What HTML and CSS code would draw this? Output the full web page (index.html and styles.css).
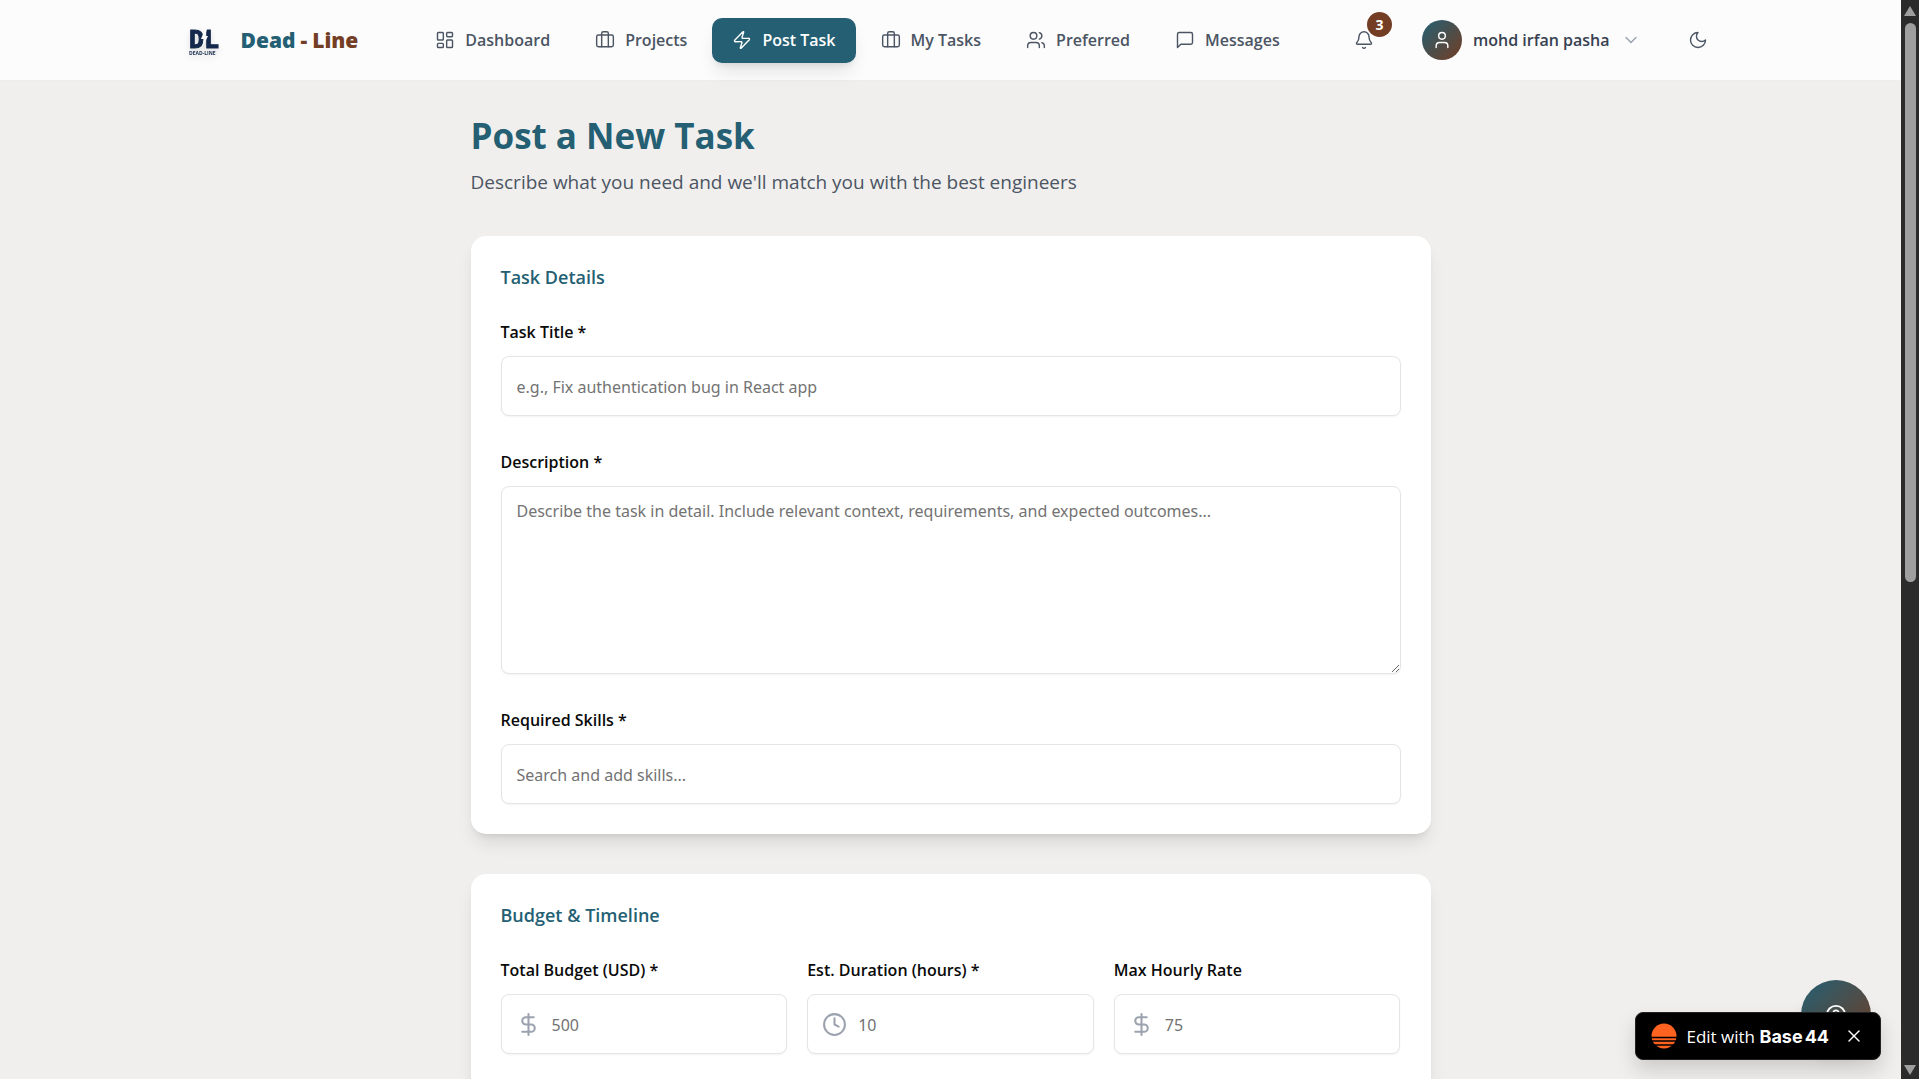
FILE: index.html
```html
<!DOCTYPE html>
<html lang="en">
<head>
  <meta charset="UTF-8">
  <meta name="viewport" content="width=device-width, initial-scale=1.0">
  <title>Post a New Task</title>
  <link rel="stylesheet" href="styles.css">
</head>
<body>

<div class="app">
  <div class="page">
    <header class="header">
      <div class="header-inner">
        <a class="brand" href="#">
          <svg class="brand-mark" viewBox="0 0 46 46" aria-hidden="true">
            <text class="mark-letters" x="8" y="31">DL</text>
            <polygon class="mark-bolt" points="24,12 20,22 23,22 21,31 27,19 24,19 26,12" />
            <text class="mark-caption" x="8" y="38">DEAD-LINE</text>
          </svg>
          <span class="brand-name"><span>Dead</span><span class="accent">-</span><span class="accent">Line</span></span>
        </a>

        <nav class="nav">
          <a class="nav-link" href="#">
            <svg class="icon" viewBox="0 0 24 24"><rect x="3" y="3" width="7" height="9" rx="1"/><rect x="14" y="3" width="7" height="5" rx="1"/><rect x="14" y="12" width="7" height="9" rx="1"/><rect x="3" y="16" width="7" height="5" rx="1"/></svg>
            Dashboard
          </a>
          <a class="nav-link" href="#">
            <svg class="icon" viewBox="0 0 24 24"><rect x="2" y="6" width="20" height="14" rx="2"/><path d="M16 20V4a2 2 0 0 0-2-2h-4a2 2 0 0 0-2 2v16"/></svg>
            Projects
          </a>
          <a class="nav-link active" href="#">
            <svg class="icon" viewBox="0 0 24 24"><path d="M4 14a1 1 0 0 1-.78-1.63l9.9-10.2a.5.5 0 0 1 .86.46l-1.92 6.02A1 1 0 0 0 13 10h7a1 1 0 0 1 .78 1.63l-9.9 10.2a.5.5 0 0 1-.86-.46l1.92-6.02A1 1 0 0 0 11 14z"/></svg>
            Post Task
          </a>
          <a class="nav-link" href="#">
            <svg class="icon" viewBox="0 0 24 24"><rect x="2" y="6" width="20" height="14" rx="2"/><path d="M16 20V4a2 2 0 0 0-2-2h-4a2 2 0 0 0-2 2v16"/></svg>
            My Tasks
          </a>
          <a class="nav-link" href="#">
            <svg class="icon" viewBox="0 0 24 24"><path d="M16 21v-2a4 4 0 0 0-4-4H6a4 4 0 0 0-4 4v2"/><circle cx="9" cy="7" r="4"/><path d="M22 21v-2a4 4 0 0 0-3-3.87"/><path d="M16 3.13a4 4 0 0 1 0 7.75"/></svg>
            Preferred
          </a>
          <a class="nav-link" href="#">
            <svg class="icon" viewBox="0 0 24 24"><path d="M21 15a2 2 0 0 1-2 2H7l-4 4V5a2 2 0 0 1 2-2h14a2 2 0 0 1 2 2z"/></svg>
            Messages
          </a>
        </nav>

        <div class="actions">
          <button class="icon-btn" type="button" aria-label="Notifications">
            <svg class="icon" viewBox="0 0 24 24"><path d="M10.268 21a2 2 0 0 0 3.464 0"/><path d="M3.262 15.326A1 1 0 0 0 4 17h16a1 1 0 0 0 .74-1.673C19.41 13.956 18 12.499 18 8A6 6 0 0 0 6 8c0 4.499-1.411 5.956-2.738 7.326"/></svg>
            <span class="badge">3</span>
          </button>
          <button class="user-btn" type="button">
            <span class="avatar">
              <svg class="icon" viewBox="0 0 24 24"><path d="M19 21v-2a4 4 0 0 0-4-4H9a4 4 0 0 0-4 4v2"/><circle cx="12" cy="7" r="4"/></svg>
            </span>
            mohd irfan pasha
            <svg class="icon chevron" viewBox="0 0 24 24"><path d="m6 9 6 6 6-6"/></svg>
          </button>
          <button class="icon-btn" type="button" aria-label="Toggle dark mode">
            <svg class="icon" viewBox="0 0 24 24"><path d="M12 3a6 6 0 0 0 9 9 9 9 0 1 1-9-9Z"/></svg>
          </button>
        </div>
      </div>
    </header>

    <main class="main">
      <h1>Post a New Task</h1>
      <p class="subtitle">Describe what you need and we'll match you with the best engineers</p>

      <form id="taskForm">
        <section class="card">
          <h2>Task Details</h2>
          <div class="form-group">
            <label for="title">Task Title *</label>
            <input type="text" id="title" placeholder="e.g., Fix authentication bug in React app" required>
          </div>
          <div class="form-group">
            <label for="description">Description *</label>
            <textarea id="description" placeholder="Describe the task in detail. Include relevant context, requirements, and expected outcomes..." required></textarea>
          </div>
          <div class="form-group">
            <label for="skills">Required Skills *</label>
            <input type="text" id="skills" placeholder="Search and add skills...">
          </div>
        </section>

        <section class="card">
          <h2>Budget &amp; Timeline</h2>
          <div class="form-row">
            <div class="form-group">
              <label for="budget">Total Budget (USD) *</label>
              <div class="input-icon">
                <svg class="icon" viewBox="0 0 24 24"><path d="M12 2v20"/><path d="M17 5H9.5a3.5 3.5 0 0 0 0 7h5a3.5 3.5 0 0 1 0 7H6"/></svg>
                <input type="text" id="budget" placeholder="500" required>
              </div>
            </div>
            <div class="form-group">
              <label for="duration">Est. Duration (hours) *</label>
              <div class="input-icon">
                <svg class="icon" viewBox="0 0 24 24"><circle cx="12" cy="12" r="10"/><path d="M12 6v6l4 2"/></svg>
                <input type="text" id="duration" placeholder="10" required>
              </div>
            </div>
            <div class="form-group">
              <label for="rate">Max Hourly Rate</label>
              <div class="input-icon">
                <svg class="icon" viewBox="0 0 24 24"><path d="M12 2v20"/><path d="M17 5H9.5a3.5 3.5 0 0 0 0 7h5a3.5 3.5 0 0 1 0 7H6"/></svg>
                <input type="text" id="rate" placeholder="75">
              </div>
            </div>
          </div>
        </section>
      </form>
    </main>

    <button class="help-btn" type="button" aria-label="Help">
      <svg class="icon" viewBox="0 0 24 24"><circle cx="12" cy="12" r="10"/><path d="M9.09 9a3 3 0 0 1 5.83 1c0 2-3 3-3 3"/><path d="M12 17h.01"/></svg>
    </button>

    <div class="edit-badge">
      <svg class="edit-logo" viewBox="0 0 26 26" aria-hidden="true">
        <circle cx="13" cy="13" r="12.5" fill="#ff631f"/>
        <path d="M0 14.5h26M0 18h26M0 22h26" stroke="#000" stroke-width="1.4"/>
      </svg>
      <a href="#">Edit with <strong>Base<span>44</span></strong></a>
      <button type="button" aria-label="Close">
        <svg class="icon" viewBox="0 0 24 24"><path d="M18 6 6 18"/><path d="m6 6 12 12"/></svg>
      </button>
    </div>
  </div>

  <div class="scrollbar" aria-hidden="true">
    <svg viewBox="0 0 12 10"><path d="M6 0l6 10H0z"/></svg>
    <div class="scroll-track"><div class="scroll-thumb"></div></div>
    <svg viewBox="0 0 12 10"><path d="M6 10l6-10H0z"/></svg>
  </div>
</div>

</body>
</html>
```
FILE: styles.css
```css
* { box-sizing: border-box; }
body { margin: 0; font-family: "Open Sans", "Noto Sans", sans-serif; font-size: 16px; color: #0a0a0a; background: #f1efed; }
button, input, textarea { font: inherit; }
button { border: 0; padding: 0; background: none; cursor: pointer; }
a { color: inherit; text-decoration: none; }

.app { display: flex; height: 100vh; overflow: hidden; }
.page { position: relative; flex: 1; min-width: 0; overflow: hidden; }
.icon { flex: none; width: 20px; height: 20px; fill: none; stroke: currentColor; stroke-width: 1.7; stroke-linecap: round; stroke-linejoin: round; }

/* Header */
.header { height: 81px; background: #fcfcfc; border-bottom: 1px solid #efedeb; }
.header-inner { display: flex; align-items: center; max-width: 1600px; height: 80px; margin: 0 auto; padding: 0 30px; }
.brand { display: flex; align-items: center; gap: 14px; margin-right: 57px; }
.brand-mark { width: 46px; height: 46px; filter: drop-shadow(0 3px 3px rgba(0, 0, 0, 0.12)); }
.mark-letters { font: 700 25px "DejaVu Sans Mono", monospace; fill: #14294b; stroke: #14294b; stroke-width: 1; }
.mark-bolt { fill: #fcfcfc; }
.mark-caption { font: 700 5px "Open Sans", sans-serif; fill: #14294b; }
.brand-name { display: flex; gap: 5px; font-size: 21px; font-weight: 800; color: #245f73; }
.brand-name .accent { color: #733e24; }

.nav { display: flex; gap: 5px; }
.nav-link { display: flex; align-items: center; gap: 10px; height: 45px; padding: 0 20px; border-radius: 10px; font-weight: 600; color: #4b5563; white-space: nowrap; }
.nav-link.active { background: #245f73; color: #fff; box-shadow: 0 12px 18px -4px rgba(0, 0, 0, 0.1), 0 5px 7px -4px rgba(0, 0, 0, 0.1); }

.actions { display: flex; align-items: center; gap: 20px; margin-left: auto; }
.icon-btn { position: relative; display: flex; align-items: center; justify-content: center; width: 45px; height: 45px; color: #4b5563; }
.badge { position: absolute; top: -6px; right: -5px; width: 25px; height: 25px; border-radius: 50%; background: #733e24; color: #fff; font-size: 14px; font-weight: 700; line-height: 25px; }
.user-btn { display: flex; align-items: center; gap: 11px; padding: 0 15px; font-weight: 600; color: #374151; white-space: nowrap; }
.avatar { display: flex; align-items: center; justify-content: center; width: 40px; height: 40px; border-radius: 50%; background: linear-gradient(135deg, #245f73, #733e24); color: #fff; }
.chevron { color: #9ca3af; }

/* Form */
.main { max-width: 960px; margin: 0 auto; padding-top: 32px; }
h1 { margin: 0 0 9px; font-size: 35px; line-height: 45px; font-weight: 700; color: #245f73; }
.subtitle { margin: 0 0 39px; font-size: 19px; line-height: 30px; color: #4b5563; }
.card { margin-bottom: 40px; padding: 30px; border-radius: 15px; background: #fff; box-shadow: 0 12px 18px -4px rgba(0, 0, 0, 0.1), 0 5px 7px -4px rgba(0, 0, 0, 0.1); }
h2 { margin: 0 0 34px; font-size: 18px; line-height: 22px; font-weight: 600; color: #245f73; }
.form-group { margin-bottom: 36px; }
.form-group:last-child { margin-bottom: 0; }
.form-row { display: grid; grid-template-columns: repeat(3, 1fr); gap: 20px; margin-bottom: 36px; }
.form-row .form-group { margin-bottom: 0; }
label { display: block; margin-bottom: 14px; line-height: 20px; font-weight: 600; }
input, textarea { display: block; width: 100%; padding: 2px 15px 0; border: 1px solid #e5e5e5; border-radius: 8px; background: #fff; box-shadow: 0 1px 2px rgba(0, 0, 0, 0.05); font-family: "Noto Sans", sans-serif; }
input { height: 60px; }
textarea { height: 188px; padding-top: 10px; line-height: 28px; resize: vertical; }
input::placeholder, textarea::placeholder { color: #737373; }
.input-icon { position: relative; }
.input-icon .icon { position: absolute; top: 18px; left: 15px; width: 25px; height: 25px; stroke-width: 2; color: #9ca3af; }
.input-icon input { padding-left: 50px; }

/* Floating buttons */
.help-btn { position: absolute; right: 30px; bottom: 29px; display: flex; align-items: center; justify-content: center; width: 70px; height: 70px; border-radius: 50%; background: linear-gradient(135deg, #245f73, #733e24); color: #fff; box-shadow: 0 12px 18px -4px rgba(0, 0, 0, 0.1); }
.help-btn .icon { width: 22px; height: 22px; stroke-width: 2; }
.edit-badge { position: absolute; right: 20px; bottom: 19px; display: flex; align-items: center; gap: 9px; height: 48px; padding: 0 16px 0 15px; border: 1px solid #222; border-radius: 8px; background: #000; color: #fff; box-shadow: 0 10px 20px rgba(0, 0, 0, 0.15); }
.edit-logo { width: 26px; height: 26px; }
.edit-badge a { font-size: 17px; }
.edit-badge strong { font-family: Inter, sans-serif; font-size: 18px; font-weight: 700; }
.edit-badge strong span { margin-left: 2px; }
.edit-badge button { display: flex; margin-left: 6px; color: #fff; }

.scrollbar { display: flex; flex-direction: column; align-items: center; flex: none; width: 18px; padding: 6px 0 4px; background: #2b2b2b; }
.scrollbar svg { width: 12px; height: 10px; fill: #9f9f9f; }
.scroll-track { flex: 1; padding: 7px 0; }
.scroll-thumb { width: 11px; height: 54%; border-radius: 6px; background: #9f9f9f; }
```
